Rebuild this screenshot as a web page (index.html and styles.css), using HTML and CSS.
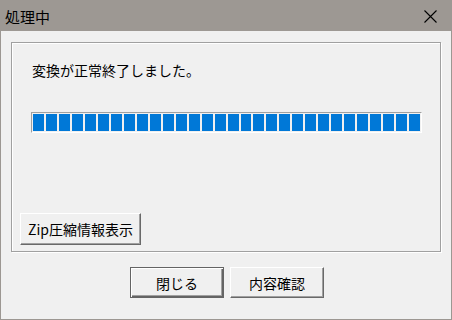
FILE: index.html
```html
<!DOCTYPE html>
<html lang="ja">

<head>
    <meta charset="UTF-8">
    <meta name="viewport" content="width=device-width, initial-scale=1.0">
    <title>処理中</title>
    <link rel="stylesheet" href="styles.css">
</head>

<body>
    <div class="window">
        <div class="titlebar">
            <span class="title">処理中</span>
            <svg class="close" width="13" height="13" viewBox="0 0 13 13">
                <path d="M0.5 0.5 L12.5 12.5 M12.5 0.5 L0.5 12.5" stroke="#000" stroke-width="1.1" fill="none"/>
            </svg>
        </div>
        <div class="main">
            <div class="group">
                <p class="message">変換が正常終了しました。</p>
                <div class="progress">
                    <div class="blk"></div><div class="blk"></div><div class="blk"></div><div class="blk"></div><div class="blk"></div>
                    <div class="blk"></div><div class="blk"></div><div class="blk"></div><div class="blk"></div><div class="blk"></div>
                    <div class="blk"></div><div class="blk"></div><div class="blk"></div><div class="blk"></div><div class="blk"></div>
                    <div class="blk"></div><div class="blk"></div><div class="blk"></div><div class="blk"></div><div class="blk"></div>
                    <div class="blk"></div><div class="blk"></div><div class="blk"></div><div class="blk"></div><div class="blk"></div>
                    <div class="blk"></div><div class="blk"></div><div class="blk"></div><div class="blk"></div><div class="blk"></div>
                </div>
                <button class="btn zip">Zip圧縮情報表示</button>
            </div>
            <div class="actions">
                <button class="btn default">閉じる</button>
                <button class="btn">内容確認</button>
            </div>
        </div>
    </div>
</body>

</html>
```

FILE: styles.css
```css
body {
    margin: 0;
    background-color: #f0f0f0;
    font-family: "Noto Sans CJK JP", sans-serif;
    color: #000;
}

.window {
    width: 452px;
    height: 320px;
    display: flex;
    flex-direction: column;
    background-color: #f0f0f0;
}

.titlebar {
    height: 31px;
    flex-shrink: 0;
    background-color: #9d9893;
    display: flex;
    align-items: center;
    justify-content: space-between;
    padding: 1px 15px 0 5px;
    box-sizing: border-box;
}

.title {
    font-size: 15px;
    line-height: 17px;
}

.close {
    display: block;
}

.main {
    flex: 1;
    border: 1px solid #9c9792;
    border-top: none;
    padding: 11px 10px 0 10px;
}

.group {
    width: 430px;
    height: 210px;
    box-sizing: border-box;
    border: 1px solid #a0a0a0;
    box-shadow: inset 1px 1px 0 #fff, 1px 1px 0 #fff;
    padding: 19px 0 0 8px;
    display: flex;
    flex-direction: column;
    align-items: flex-start;
}

.message {
    margin: 0 0 0 12px;
    font-size: 14px;
    line-height: 16px;
}

.progress {
    width: 391px;
    height: 21px;
    box-sizing: border-box;
    margin: 34px 0 0 11px;
    border: 1px solid #a0a0a0;
    border-right-color: #fff;
    border-bottom-color: #fff;
    padding: 1px;
    display: flex;
    gap: 2px;
}

.blk {
    flex: 1;
    background-color: #0078d7;
}

.btn {
    font-family: "Noto Sans CJK JP", sans-serif;
    font-size: 14px;
    line-height: 16px;
    color: #000;
    background-color: #f0f0f0;
    border: 1px solid;
    border-color: #fff #696969 #696969 #fff;
    box-shadow: inset -1px -1px 0 #a0a0a0;
    padding: 0;
    box-sizing: border-box;
    width: 94px;
    height: 31px;
}

.zip {
    width: 121px;
    height: 32px;
    margin-top: 80px;
}

.default {
    border: 1px solid #646464;
    box-shadow: inset 1px 1px 0 #fff, inset -1px -1px 0 #646464, inset -2px -2px 0 #a0a0a0;
}

.actions {
    display: flex;
    justify-content: center;
    gap: 6px;
    margin-top: 15px;
    padding-left: 2px;
}
```
